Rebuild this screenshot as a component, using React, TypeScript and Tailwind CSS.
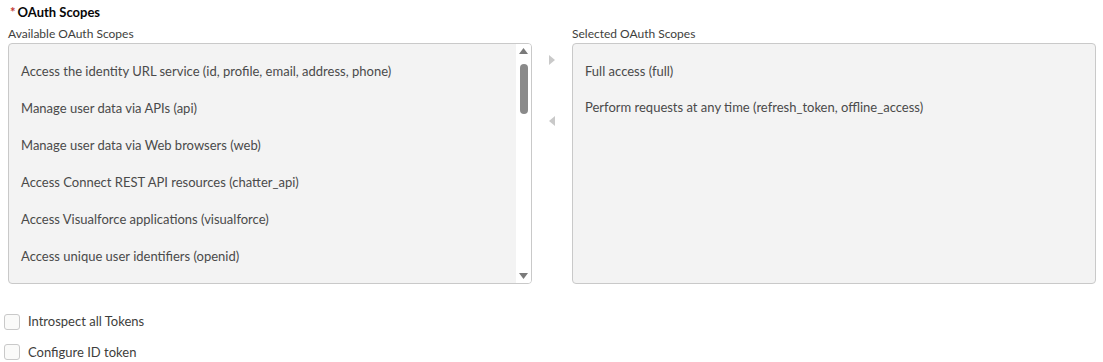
const AVAILABLE = [
  'Access the identity URL service (id, profile, email, address, phone)',
  'Manage user data via APIs (api)',
  'Manage user data via Web browsers (web)',
  'Access Connect REST API resources (chatter_api)',
  'Access Visualforce applications (visualforce)',
  'Access unique user identifiers (openid)',
];

const SELECTED = [
  'Full access (full)',
  'Perform requests at any time (refresh_token, offline_access)',
];

export default function App() {
  return (
    <div className="w-[1103px] h-[362px] bg-white text-[#3e3e3c] font-['Lato','Liberation_Sans',sans-serif] overflow-hidden">
      {/* Title */}
      <div className="pl-[10px] pt-[1px] h-[24px] flex items-center text-[13px] font-bold text-[#080707]">
        <span className="text-[#c23934] mr-[2px]">*</span>
        OAuth Scopes
      </div>

      <div className="flex pl-[8px]">
        {/* Available */}
        <div className="flex flex-col w-[524px]">
          <div className="text-[12px] text-[#3e3e3c] h-[19px] leading-[19px]">Available OAuth Scopes</div>
          <div className="h-[241px] border border-[#c9c9c9] rounded-[4px] bg-[#f3f3f3] flex overflow-hidden">
            <div className="flex-1 pl-[12px] pt-[17px] flex flex-col">
              {AVAILABLE.map(item => (
                <div key={item} className="h-[37.4px] text-[13px] leading-[20px] text-[#4a4a4a]">{item}</div>
              ))}
            </div>
            <div className="w-[15px] bg-white flex flex-col items-center py-[4px]">
              <svg width="9" height="6" viewBox="0 0 9 6"><path d="M4.5 0L9 6H0z" fill="#7a7a7a" /></svg>
              <div className="w-[8px] h-[50px] rounded-full bg-[#8a8a8a] mt-[10px]" />
              <div className="flex-1" />
              <svg width="9" height="6" viewBox="0 0 9 6"><path d="M0 0h9L4.5 6z" fill="#7a7a7a" /></svg>
            </div>
          </div>
        </div>

        {/* Arrows */}
        <div className="w-[40px] flex flex-col items-center pt-[31px] gap-[51px]">
          <svg width="6" height="10" viewBox="0 0 6 10"><path d="M0 0L6 5L0 10z" fill="#c9c9c9" /></svg>
          <svg width="6" height="10" viewBox="0 0 6 10"><path d="M6 0L0 5L6 10z" fill="#c9c9c9" /></svg>
        </div>

        {/* Selected */}
        <div className="flex flex-col w-[524px]">
          <div className="text-[12px] text-[#3e3e3c] h-[19px] leading-[19px]">Selected OAuth Scopes</div>
          <div className="h-[241px] border border-[#c9c9c9] rounded-[4px] bg-[#f3f3f3] pl-[12px] pt-[17px]">
            {SELECTED.map(item => (
              <div key={item} className="h-[36px] text-[13px] leading-[20px] text-[#4a4a4a]">{item}</div>
            ))}
          </div>
        </div>
      </div>

      {/* Checkboxes */}
      <div className="pl-[4px] pt-[28px] flex flex-col gap-[11px]">
        {['Introspect all Tokens', 'Configure ID token'].map(label => (
          <label key={label} className="flex items-center gap-[8px] text-[13px] text-[#3e3e3c]">
            <span className="w-[16px] h-[16px] border border-[#c9c9c9] rounded-[3px] bg-[#fafaf9]" />
            {label}
          </label>
        ))}
      </div>
    </div>
  );
}
